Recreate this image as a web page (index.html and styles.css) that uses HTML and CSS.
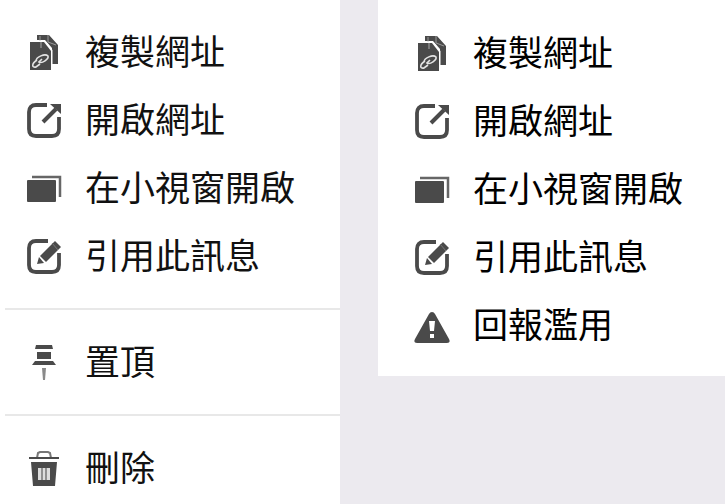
FILE: index.html
```html
<!DOCTYPE html>
<html lang="zh-Hant">
<head>
    <meta charset="UTF-8">
    <meta name="viewport" content="width=device-width, initial-scale=1.0">
    <title>訊息選單</title>
    <link rel="stylesheet" href="styles.css">
</head>
<body>
    <!-- Shared icons -->
    <svg class="sprite" aria-hidden="true">
        <symbol id="icon-copy" viewBox="0 0 36 36">
            <path d="M11 1h12l9 10v19h-6V14L19 6h-8z" fill="#4a4a4a"/>
            <path d="M14 2v5M22 1v7l8 3" fill="none" stroke="#999" stroke-width="1"/>
            <path d="M4 8h14l7 9v19H4z" fill="#4a4a4a"/>
            <path d="M15 8v6" fill="none" stroke="#aaa" stroke-width="1"/>
            <path d="M10 7h9l7 9v14" fill="none" stroke="#fff" stroke-width="1"/>
            <path d="M10 27c0-4 9-8 12-5 1 3-6 8-9 6l3-3M11 26c-6 4-5 8-1 7l4-3" fill="none" stroke="#e4e4e4" stroke-width="1.6"/>
        </symbol>
        <symbol id="icon-open" viewBox="0 0 36 36">
            <path d="M21 3H10Q3 3 3 10v17q0 7 7 7h16q7 0 7-7V15" fill="none" stroke="#4a4a4a" stroke-width="3.8"/>
            <path d="M17 20L30 7" fill="none" stroke="#4a4a4a" stroke-width="4"/>
            <path d="M24 2h11v10z" fill="#4a4a4a"/>
        </symbol>
        <symbol id="icon-window" viewBox="0 0 36 36">
            <path d="M6 7h28v20" fill="none" stroke="#666" stroke-width="2.5"/>
            <rect x="1" y="10" width="29" height="22" rx="1" fill="#4a4a4a"/>
        </symbol>
        <symbol id="icon-quote" viewBox="0 0 36 36">
            <path d="M22 3H10Q3 3 3 10v17q0 7 7 7h16q7 0 7-7V15" fill="none" stroke="#4a4a4a" stroke-width="3.8"/>
            <path d="M11 26l2-7 5 6z" fill="#4a4a4a"/>
            <path d="M14 18L29 3l6 6-15 15z" fill="#4a4a4a"/>
            <path d="M26 5l6 7" stroke="#777" stroke-width="1"/>
        </symbol>
        <symbol id="icon-report" viewBox="0 0 36 36">
            <path d="M18 5q2 0 3 2l14 25q2 4-2 4H3q-4 0-2-4L15 7q1-2 3-2z" fill="#4a4a4a"/>
            <path d="M15 14h6l-1 10h-4zM16 27h4v4h-4z" fill="#fff"/>
        </symbol>
        <symbol id="icon-pin" viewBox="0 0 36 38">
            <path d="M10 2h16l1 4H9zM11 9h14v7H11zM9 18h18l3 4H6z" fill="#4a4a4a"/>
            <path d="M16 25h4l-1 12h-2z" fill="#8a8a8a"/>
        </symbol>
        <symbol id="icon-trash" viewBox="0 0 36 38">
            <path d="M11 9l1-5 2-1h8l2 1 1 5" fill="none" stroke="#777" stroke-width="2"/>
            <path d="M3 8h30v2H3zM5 13h26l-2 24H7z" fill="#4a4a4a"/>
            <path d="M12 19h12v12H12z" fill="#ddd"/>
            <path d="M16 19v12M20 19v12" stroke="#777" stroke-width="1.5"/>
        </symbol>
    </svg>

    <div class="container">
        <div class="menu">
            <div class="group">
                <button class="item" type="button"><svg class="icon" aria-hidden="true"><use href="#icon-copy"/></svg><span class="label">複製網址</span></button>
                <button class="item" type="button"><svg class="icon" aria-hidden="true"><use href="#icon-open"/></svg><span class="label">開啟網址</span></button>
                <button class="item" type="button"><svg class="icon" aria-hidden="true"><use href="#icon-window"/></svg><span class="label">在小視窗開啟</span></button>
                <button class="item" type="button"><svg class="icon" aria-hidden="true"><use href="#icon-quote"/></svg><span class="label">引用此訊息</span></button>
            </div>
            <div class="group">
                <button class="item" type="button"><svg class="icon tall" aria-hidden="true"><use href="#icon-pin"/></svg><span class="label">置頂</span></button>
            </div>
            <div class="group">
                <button class="item" type="button"><svg class="icon tall" aria-hidden="true"><use href="#icon-trash"/></svg><span class="label">刪除</span></button>
            </div>
        </div>

        <div class="menu menu-short">
            <div class="group">
                <button class="item" type="button"><svg class="icon" aria-hidden="true"><use href="#icon-copy"/></svg><span class="label">複製網址</span></button>
                <button class="item" type="button"><svg class="icon" aria-hidden="true"><use href="#icon-open"/></svg><span class="label">開啟網址</span></button>
                <button class="item" type="button"><svg class="icon" aria-hidden="true"><use href="#icon-window"/></svg><span class="label">在小視窗開啟</span></button>
                <button class="item" type="button"><svg class="icon" aria-hidden="true"><use href="#icon-quote"/></svg><span class="label">引用此訊息</span></button>
                <button class="item" type="button"><svg class="icon" aria-hidden="true"><use href="#icon-report"/></svg><span class="label">回報濫用</span></button>
            </div>
        </div>
    </div>
</body>
</html>
```
FILE: styles.css
```css
body {
    margin: 0;
    background-color: #eceaef;
    font-family: "Noto Sans CJK TC", sans-serif;
}

.sprite {
    display: none;
}

.container {
    display: grid;
    grid-template-columns: 340fr 347fr;
    gap: 38px;
    align-items: start;
    min-height: 100vh;
}

.menu {
    background-color: #ffffff;
    padding-left: 5px;
}

.group {
    padding: 18px 0;
}

.group + .group {
    border-top: 2px solid #e8e8e8;
}

.group:last-child {
    padding-bottom: 3px;
}

.item {
    display: flex;
    align-items: center;
    gap: 23px;
    width: 100%;
    height: 68px;
    padding: 0 0 0 21px;
    border: none;
    background: none;
    color: #111111;
    font-family: inherit;
    font-size: 35px;
    white-space: nowrap;
    cursor: pointer;
}

.item:hover {
    background-color: #f5f5f7;
}

.label {
    line-height: 52px;
    padding-bottom: 4px;
}

.icon {
    flex: none;
    width: 36px;
    height: 36px;
}

.icon.tall {
    height: 38px;
}

.menu-short .item {
    padding-left: 31px;
    color: #000000;
}

.menu-short .group {
    padding: 19px 0 17px;
}
```
